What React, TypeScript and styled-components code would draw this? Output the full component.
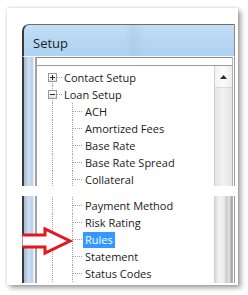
import React, { FunctionComponent } from 'react'
import styled, { createGlobalStyle } from 'styled-components'

const GlobalStyle = createGlobalStyle`
  html, body {
    margin: 0;
    padding: 0;
    background: #ffffff;
  }
  body {
    font-family: "Open Sans", "Liberation Sans", sans-serif;
  }
`

const Page = styled.div`
  width: 248px;
  height: 295px;
  padding: 8px 0 0 7px;
  box-sizing: border-box;
  overflow: hidden;
`
const Card = styled.div`
  position: relative;
  width: 231px;
  height: 277px;
  box-sizing: border-box;
  padding: 16px 3px 2px 15px;
  background: #ffffff;
  box-shadow: 3px 3px 5px rgba(0, 0, 0, 0.35), 0 0 3px rgba(0, 0, 0, 0.18);
  display: flex;
  flex-direction: column;
`
const Part = styled.div<{ $height: number }>`
  height: ${p => p.$height}px;
  display: flex;
  flex-direction: column;
  overflow: hidden;
`
const TitleBar = styled.div`
  height: 33px;
  flex: none;
  box-sizing: border-box;
  border-top: 1px solid #6f6f6f;
  border-left: 2px solid #3a3a3a;
  border-right: 1px solid #8a8a8a;
  border-bottom: 1px solid #f4f9fd;
  border-top-left-radius: 7px;
  padding: 10px 0 0 9px;
  background:
    linear-gradient(90deg, rgba(255,255,255,0) 48%, rgba(150,180,210,0.25) 52%, rgba(255,255,255,0) 58%),
    linear-gradient(180deg, #c4def5 0%, #b7d7f3 45%, #b0d3f2 100%);
  font-size: 13px;
  line-height: 16px;
  color: #1e1e1e;
`
const Body = styled.div`
  flex: 1;
  display: flex;
  min-height: 0;
`
const Frame = styled.div`
  width: 15px;
  flex: none;
  box-sizing: border-box;
  border-left: 2px solid #3a3a3a;
  border-right: 2px solid #a2a2a2;
  background: linear-gradient(90deg, #a3bcd8 0%, #cfe0f1 45%, #b9cfe6 75%, #f4f8fc 92%, #ffffff 100%);
`
const Client = styled.div<{ $top: number }>`
  flex: 1;
  display: flex;
  flex-direction: column;
  padding-top: ${p => p.$top}px;
  background: #ffffff;
  border-top: ${p => (p.$top ? '1px solid #8c8c8c' : 'none')};
  min-width: 0;
`
const TreeBox = styled.div<{ $bordered: boolean }>`
  flex: 1;
  display: flex;
  border-top: ${p => (p.$bordered ? '1px solid #9c9c9c' : 'none')};
  min-height: 0;
`
const Tree = styled.div<{ $top: number }>`
  flex: 1;
  padding: ${p => p.$top}px 0 0 5px;
  display: flex;
  flex-direction: column;
  overflow: hidden;
`
const Row = styled.div`
  height: 17px;
  flex: none;
  display: flex;
  align-items: center;
`
type LineKind = 'full' | 'bottom' | 'none'
const Cell = styled.span<{ $line: LineKind; $branch?: boolean }>`
  position: relative;
  width: 20px;
  height: 17px;
  flex: none;
  &::before {
    content: '';
    display: ${p => (p.$line === 'none' ? 'none' : 'block')};
    position: absolute;
    left: 10px;
    top: ${p => (p.$line === 'bottom' ? '8px' : '0')};
    bottom: 0;
    border-left: 1px dotted #a3a3a3;
  }
  &::after {
    content: '';
    display: ${p => (p.$branch ? 'block' : 'none')};
    position: absolute;
    left: 11px;
    right: 0;
    top: 8px;
    border-top: 1px dotted #a3a3a3;
  }
`
const Expander = styled.span<{ $open?: boolean }>`
  position: absolute;
  left: 6px;
  top: 4px;
  width: 9px;
  height: 9px;
  box-sizing: border-box;
  border: 1px solid #979797;
  background: linear-gradient(180deg, #ffffff, #e3e3e3);
  z-index: 1;
  &::before {
    content: '';
    position: absolute;
    left: 1px;
    top: 3px;
    width: 5px;
    height: 1px;
    background: #2a2a2a;
  }
  &::after {
    content: '';
    display: ${p => (p.$open ? 'none' : 'block')};
    position: absolute;
    left: 3px;
    top: 1px;
    width: 1px;
    height: 5px;
    background: #2a2a2a;
  }
`
const Label = styled.span<{ $selected?: boolean; $gap: number }>`
  margin-left: ${p => p.$gap}px;
  padding: 0 2px;
  height: 16px;
  line-height: 16px;
  font-size: 11px;
  white-space: nowrap;
  color: ${p => (p.$selected ? '#ffffff' : '#1a1a1a')};
  background: ${p => (p.$selected ? '#3399ff' : 'transparent')};
`
const ScrollBar = styled.div`
  width: 18px;
  flex: none;
  display: flex;
  flex-direction: column;
  box-sizing: border-box;
  border-left: 1px solid #d0d0d0;
  background: linear-gradient(90deg, #e6e6e6, #f1f1f1 50%, #e3e3e3);
`
const ScrollButton = styled.div`
  height: 22px;
  flex: none;
  display: flex;
  align-items: center;
  justify-content: center;
  box-sizing: border-box;
  border-bottom: 1px solid #dadada;
  background: linear-gradient(90deg, #f2f2f2, #fbfbfb 50%, #ececec);
`
const Thumb = styled.div`
  flex: 1;
  box-sizing: border-box;
  border-right: 1px solid #a8a8a8;
  background: linear-gradient(90deg, #d8d8d8 0%, #f3f3f3 25%, #ececec 55%, #c9c9cf 75%, #e6e6e6 88%, #b5b5b5 100%);
`
const RightEdge = styled.div`
  width: 3px;
  flex: none;
  box-sizing: border-box;
  border-left: 1px solid #b2b2b2;
  border-right: 1px solid #9a9a9a;
  background: #ffffff;
`
const Tear = styled.div`
  height: 10px;
  flex: none;
`
const Arrow = styled.svg`
  position: absolute;
  left: 14px;
  top: 218px;
`

type Item = {
  label: string;
  level: 0 | 1;
  expander?: 'plus' | 'minus';
  first?: boolean;
  selected?: boolean;
}

const UPPER: Item[] = [
  { label: 'Contact Setup', level: 0, expander: 'plus', first: true },
  { label: 'Loan Setup', level: 0, expander: 'minus' },
  { label: 'ACH', level: 1 },
  { label: 'Amortized Fees', level: 1 },
  { label: 'Base Rate', level: 1 },
  { label: 'Base Rate Spread', level: 1 },
  { label: 'Collateral', level: 1 }
]
const LOWER: Item[] = [
  { label: 'Payment Method', level: 1 },
  { label: 'Risk Rating', level: 1 },
  { label: 'Rules', level: 1, selected: true },
  { label: 'Statement', level: 1 },
  { label: 'Status Codes', level: 1 }
]

const TreeRow: FunctionComponent<{ item: Item }> = ({ item }) => {
  if (item.level === 0) {
    return (
      <Row>
        <Cell $line={item.first ? 'bottom' : 'full'} $branch>
          <Expander $open={item.expander === 'minus'} />
        </Cell>
        <Label $gap={0}>{item.label}</Label>
      </Row>
    )
  }
  return (
    <Row>
      <Cell $line="full" />
      <Cell $line="full" $branch />
      <Label $gap={1} $selected={item.selected}>{item.label}</Label>
    </Row>
  )
}

const App: FunctionComponent = () => (
  <Page>
    <GlobalStyle />
    <Card>
      <Part $height={162}>
        <TitleBar>Setup</TitleBar>
        <Body>
          <Frame />
          <Client $top={7}>
            <TreeBox $bordered>
              <Tree $top={3}>
                {UPPER.map(item => <TreeRow key={item.label} item={item} />)}
              </Tree>
              <ScrollBar>
                <ScrollButton>
                  <svg width="7" height="4" viewBox="0 0 7 4">
                    <path d="M0 4 L3.5 0 L7 4 Z" fill="#2b2b2b" />
                  </svg>
                </ScrollButton>
              </ScrollBar>
            </TreeBox>
          </Client>
          <RightEdge />
        </Body>
      </Part>
      <Tear />
      <Part $height={87}>
        <Body>
          <Frame />
          <Client $top={0}>
            <TreeBox $bordered={false}>
              <Tree $top={1}>
                {LOWER.map(item => <TreeRow key={item.label} item={item} />)}
              </Tree>
              <ScrollBar>
                <Thumb />
              </ScrollBar>
            </TreeBox>
          </Client>
          <RightEdge />
        </Body>
      </Part>
      <Arrow width="54" height="30" viewBox="0 0 54 30">
        <path
          d="M1.5 9 H24 V3 L49 15 L24 27 V21 H1.5"
          fill="#ffffff"
          stroke="#e3171d"
          strokeWidth="3"
          strokeLinejoin="miter"
        />
      </Arrow>
    </Card>
  </Page>
)

export default App
